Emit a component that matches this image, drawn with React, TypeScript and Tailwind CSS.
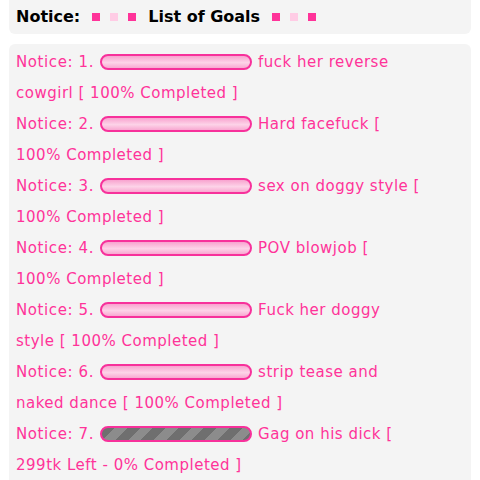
import React from "react";

// text after the bar, with the line break the chat box puts in
type Goal = { id: number; text: string; done: boolean };

const goals: Goal[] = [
	{ id: 1, text: "fuck her reverse\ncowgirl [ 100% Completed ]", done: true },
	{ id: 2, text: "Hard facefuck [\n100% Completed ]", done: true },
	{ id: 3, text: "sex on doggy style [\n100% Completed ]", done: true },
	{ id: 4, text: "POV blowjob [\n100% Completed ]", done: true },
	{ id: 5, text: "Fuck her doggy\nstyle [ 100% Completed ]", done: true },
	{ id: 6, text: "strip tease and\nnaked dance [ 100% Completed ]", done: true },
	{ id: 7, text: "Gag on his dick [\n299tk Left - 0% Completed ]", done: false },
];

const Bar = ({ done }: { done: boolean }) => (
	<span
		className={
			done
				? "inline-block align-middle w-[152px] h-[16px] mx-[6px] -mt-[2px] rounded-full border-2 border-[#f7319b] bg-[linear-gradient(to_bottom,#f8a3cf,#fdd3e8_55%,#f8a8d1)]"
				: "inline-block align-middle w-[152px] h-[16px] mx-[6px] -mt-[2px] rounded-full border-2 border-[#f7319b] bg-[repeating-linear-gradient(135deg,#6f6f6f_0_9px,#8c8c8c_9px_18px)]"
		}
	/>
);

const Dots = () => (
	<span className="inline-flex items-center gap-[10px] mx-[12px]">
		<span className="w-[8px] h-[8px] bg-[#ff3399]" />
		<span className="w-[8px] h-[8px] bg-[#ffcce5]" />
		<span className="w-[8px] h-[8px] bg-[#ff3399]" />
	</span>
);

export default function App() {
	return (
		<div className="w-[480px] h-[480px] overflow-hidden bg-white px-[9px] font-['DejaVu_Sans',Verdana,sans-serif]">
			<div className="rounded-b-[6px] bg-[#f4f4f4] h-[34px] px-[7px] flex items-center text-[16px] font-bold text-black">
				Notice:
				<Dots />
				List of Goals
				<Dots />
			</div>
			<div className="mt-[10px] rounded-[6px] bg-[#f4f4f4] pl-[7px] pr-[14px] pt-[3px] pb-4 text-[15px] leading-[31px] text-[#ff3399] whitespace-pre-line">
				{goals.map((g) => (
					<div key={g.id}>
						<span className="tracking-[0.6px]">Notice: {g.id}.</span>
						<Bar done={g.done} />
						<span className="tracking-[0.5px]">{g.text}</span>
					</div>
				))}
			</div>
		</div>
	);
}
